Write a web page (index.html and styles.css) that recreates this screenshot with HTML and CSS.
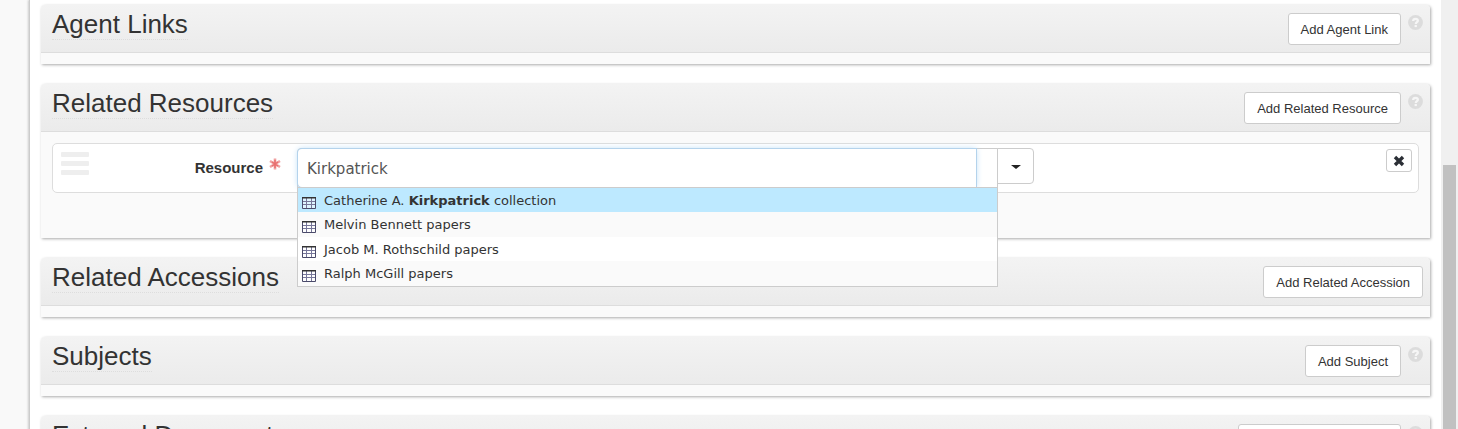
FILE: index.html
```html
<!DOCTYPE html>
<html lang="en">
<head>
<meta charset="utf-8">
<title>Edit record</title>
<link rel="stylesheet" href="styles.css">
</head>
<body>
<svg class="defs" aria-hidden="true">
  <symbol id="help" viewBox="0 0 16 16"><circle cx="8" cy="8" r="7.9" fill="#dcdcdc"/><path d="M5.500 6.400C5.500 4.700 6.600 4 8 4s2.500.8 2.500 2.100C10.500 7.600 8.300 7.600 8.300 9.500" fill="none" stroke="#f6f6f6" stroke-width="2.400"/><rect x="7" y="10.600" width="2.500" height="2.300" fill="#f6f6f6"/></symbol>
  <symbol id="table" viewBox="0 0 14 12"><path fill="#fff" fill-opacity=".5" d="M1 1h12v10H1z"/><path fill="none" stroke="#77779a" d="M1 4.500h12M1 7.500h12M4.500 1v10M9.500 1v10"/><path fill="none" stroke="#4a4a6a" d="M.5 .5h13v11H.5z"/><path stroke="#333" stroke-width="1.500" d="M0 .75h14"/></symbol>
</svg>
<div class="page">
  <main class="content">
    <section class="panel">
      <header class="panel-head"><h2>Agent Links</h2><button class="btn" type="button">Add Agent Link</button><svg class="help"><use href="#help"/></svg></header>
      <div class="panel-body"></div>
    </section>
    <section class="panel">
      <header class="panel-head"><h2>Related Resources</h2><button class="btn" type="button">Add Related Resource</button><svg class="help"><use href="#help"/></svg></header>
      <div class="panel-body filled">
        <div class="record">
          <div class="label-cell">
            <span class="grip"><i></i><i></i><i></i></span>
            <label for="resource">Resource</label>
            <svg class="required" viewBox="0 0 12 12" aria-hidden="true"><path d="M6 .5v11M1 3l10 6M11 3L1 9" stroke="#f0a0a0" stroke-width="2.600"/><path d="M6 2v8M3 4l6 4M9 4l-6 4" stroke="#e87070" stroke-width="1.500"/></svg>
          </div>
          <div class="picker">
            <div class="token-box">
              <input id="resource" type="text" value="Kirkpatrick" autocomplete="off">
              <ul class="menu">
                <li class="active"><svg><use href="#table"/></svg><span>Catherine A. <b>Kirkpatrick</b> collection</span></li>
                <li><svg><use href="#table"/></svg><span>Melvin Bennett papers</span></li>
                <li><svg><use href="#table"/></svg><span>Jacob M. Rothschild papers</span></li>
                <li><svg><use href="#table"/></svg><span>Ralph McGill papers</span></li>
              </ul>
            </div>
            <button class="toggle" type="button" aria-label="Open menu"><span class="caret"></span></button>
          </div>
          <button class="remove" type="button" aria-label="Remove"><svg viewBox="0 0 12 12"><path d="M2 2l8 8M10 2l-8 8" stroke="#2b2f36" stroke-width="3.400"/></svg></button>
        </div>
      </div>
    </section>
    <section class="panel">
      <header class="panel-head"><h2>Related Accessions</h2><button class="btn" type="button">Add Related Accession</button></header>
      <div class="panel-body"></div>
    </section>
    <section class="panel">
      <header class="panel-head"><h2>Subjects</h2><button class="btn" type="button">Add Subject</button><svg class="help"><use href="#help"/></svg></header>
      <div class="panel-body"></div>
    </section>
    <section class="panel">
      <header class="panel-head"><h2>External Documents</h2><button class="btn" type="button">Add External Document</button><svg class="help"><use href="#help"/></svg></header>
      <div class="panel-body"></div>
    </section>
  </main>
  <div class="scrollbar"><div class="thumb"></div></div>
</div>
</body>
</html>
```

FILE: styles.css
```css
* { box-sizing: border-box; }
body {
  margin: 0;
  background: #f9f9f9;
  color: #333;
  font-family: "Liberation Sans", Arial, sans-serif;
  font-size: 13px;
}
button, input { font: inherit; color: inherit; margin: 0; }
.defs { display: none; }
.page {
  display: grid;
  grid-template-columns: minmax(0, 1fr) 17px;
  height: 100vh;
  overflow: hidden;
  padding-left: 29px;
}
.content {
  display: flex;
  flex-direction: column;
  gap: 20px;
  padding: 5px 11px;
  background: #fff;
  border-left: 1px solid #ccc;
  box-shadow: -1px 0 2px #ccc;
}
.panel {
  flex: none;
  border-radius: 4px 4px 0 0;
  background: #fafafa;
  box-shadow: 1px 1px 3px #aaa;
}
.panel-head {
  display: flex;
  align-items: flex-start;
  gap: 7px;
  min-height: 48px;
  padding: 5px 7px 0 11px;
  border-bottom: 1px solid #ddd;
  border-radius: 4px 4px 0 0;
  background: linear-gradient(#f3f3f3, #ebebeb);
}
.panel-head h2 {
  margin: 0 auto 0 0;
  border-bottom: 1px dotted #ddd;
  font-size: 26px;
  font-weight: 400;
  line-height: 29px;
}
.btn {
  height: 32px;
  margin-top: 3px;
  padding: 0 12px;
  border: 1px solid #ccc;
  border-radius: 3px;
  background: #fff;
}
.help { width: 15px; height: 15px; margin-top: 5px; }
.panel-body { min-height: 11px; }
.filled { padding: 11px 11px 45px; }
.record {
  display: grid;
  grid-template-columns: 244px minmax(0, 737fr) 378fr;
  align-items: start;
  padding: 4px 6px 4px 0;
  border: 1px solid #ddd;
  border-radius: 5px;
  background: #fff;
}
.label-cell {
  display: flex;
  align-items: center;
  gap: 6px;
  padding: 4px 16px 0 8px;
  font-size: 15px;
  font-weight: 700;
  line-height: 30px;
}
.required { width: 12px; height: 12px; margin-bottom: 8px; }
.grip {
  display: grid;
  gap: 4px;
  width: 28px;
  margin: 0 auto 8px 0;
}
.grip i { height: 5px; border-radius: 1px; background: #eee; }
.picker { display: flex; align-items: flex-start; }
.token-box {
  position: relative;
  flex: 1;
  height: 40px;
  border: 1px solid #ccc;
  border-radius: 4px 0 0 0;
}
.token-box input {
  display: block;
  width: 97%;
  height: 38px;
  padding: 2px 9px 0;
  border: 0;
  border-radius: 4px 0 0 4px;
  outline: 0;
  background: #fff;
  box-shadow: 0 0 0 1px #b4d3ec, 0 0 6px #b4d9f5;
  color: #555;
  font-family: "DejaVu Sans", Verdana, sans-serif;
  font-size: 15px;
}
.menu {
  position: absolute;
  z-index: 2;
  top: 38px;
  left: -1px;
  right: -1px;
  margin: 0;
  padding: 0;
  list-style: none;
  border: 1px solid #ccc;
  background: #fff;
  font-family: "DejaVu Sans", Verdana, sans-serif;
}
.menu li {
  display: flex;
  align-items: center;
  gap: 8px;
  padding: 2px 0 0 4px;
  line-height: 22px;
}
.menu li:nth-child(even) { padding-bottom: 1px; background: #fafafa; }
.menu li.active { background: #bde9ff; }
.menu svg { width: 14px; height: 12px; margin-top: 3px; }
.toggle {
  display: grid;
  place-items: center;
  width: 37px;
  height: 36px;
  margin-left: -1px;
  padding: 2px 0 0;
  border: 1px solid #ccc;
  border-radius: 0 4px 4px 0;
  background: #fff;
}
.caret { border: 5px solid transparent; border-top: 4px solid #222; border-bottom: 0; }
.remove {
  display: grid;
  place-items: center;
  justify-self: end;
  width: 26px;
  height: 23px;
  margin-top: 1px;
  padding: 0;
  border: 1px solid #ccc;
  border-radius: 3px;
  background: #fff;
}
.remove svg { width: 12px; height: 12px; }
.scrollbar { padding: 165px 2px 0; background: #f0f0f0; }
.thumb { height: 100%; background: #c1c1c1; }
```
